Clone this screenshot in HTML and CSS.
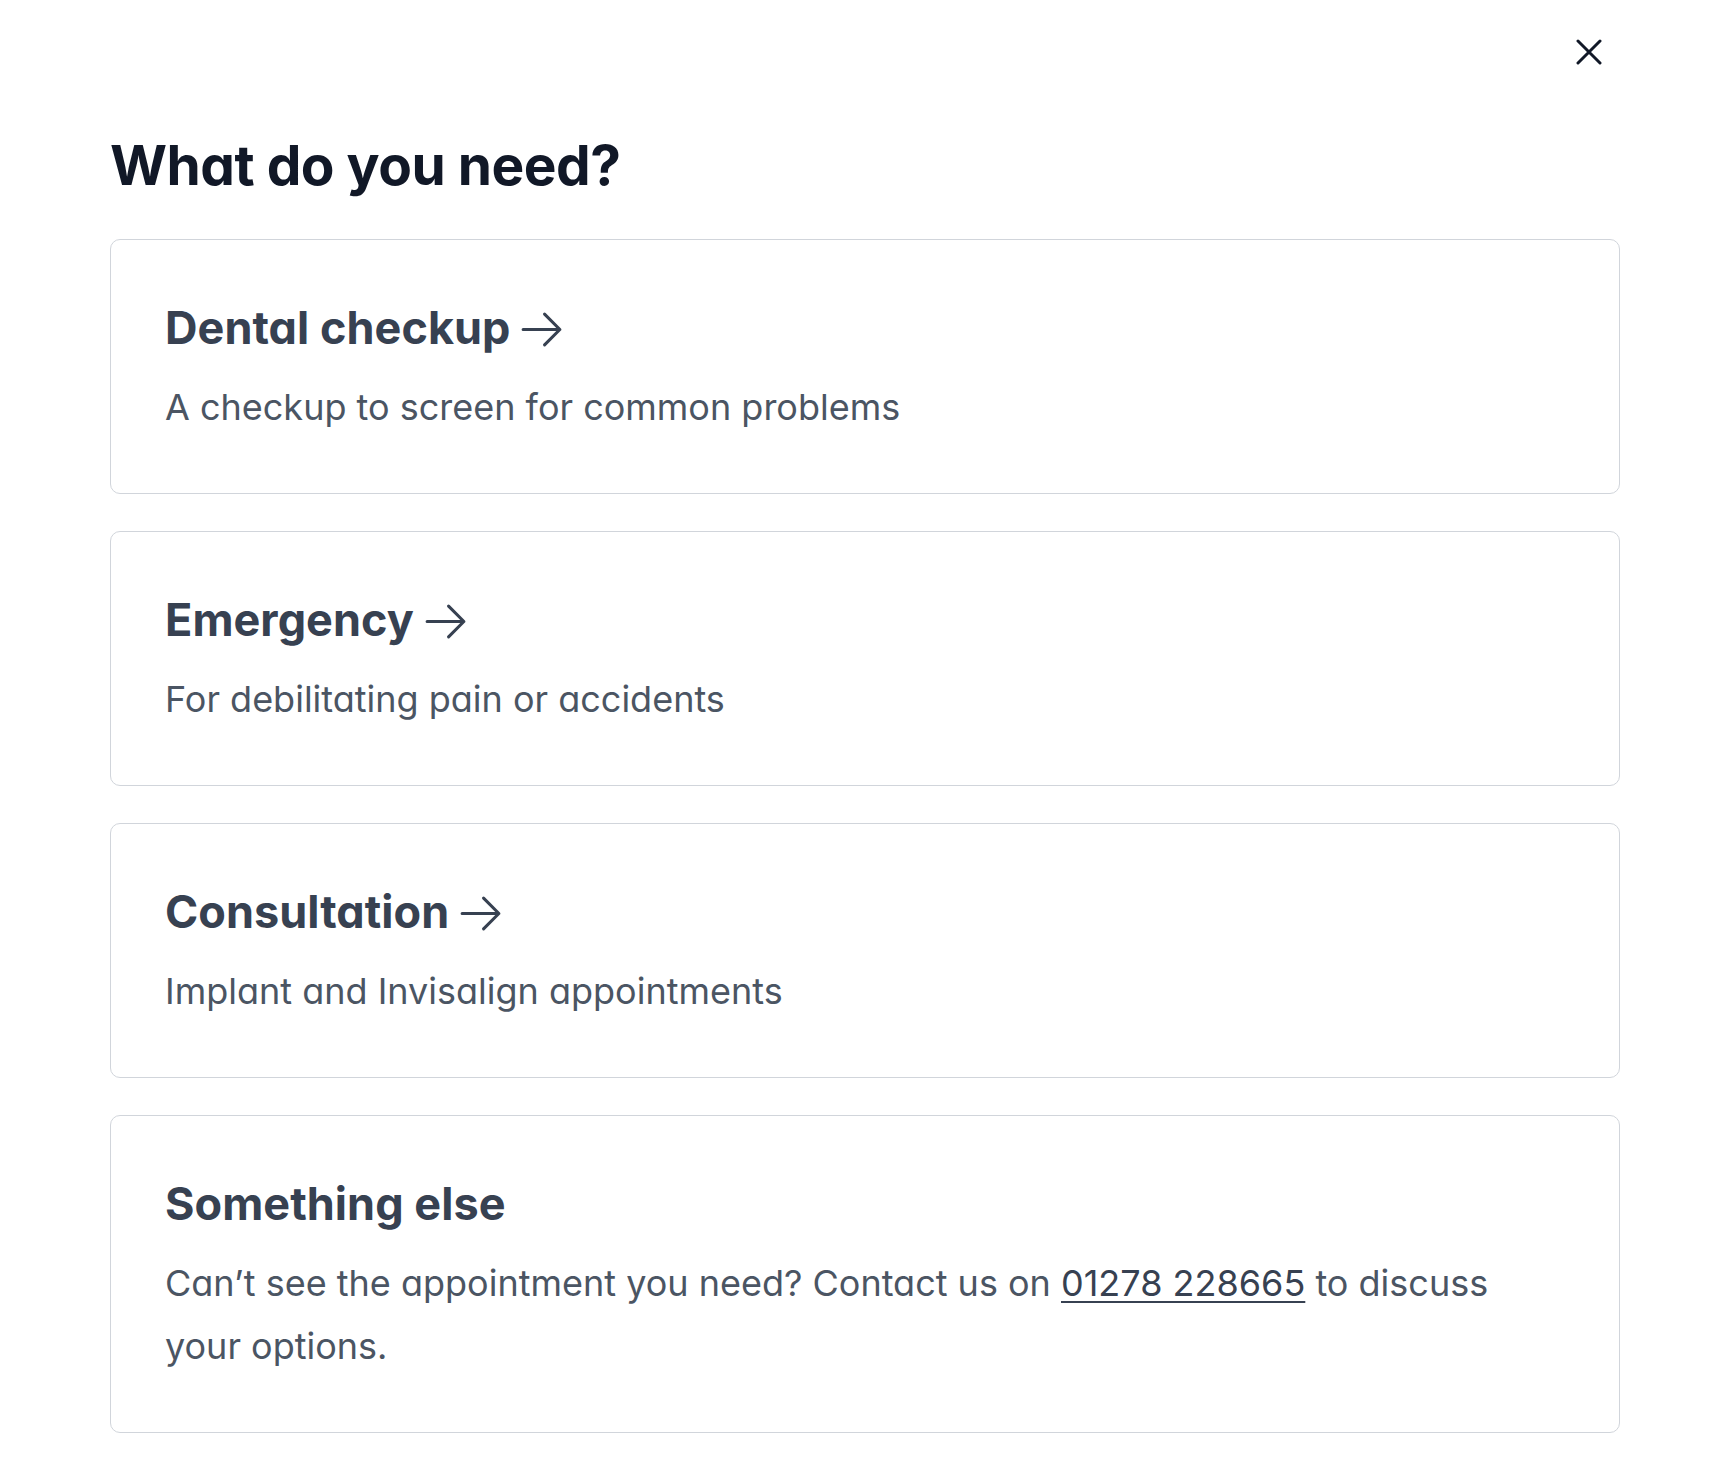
FILE: index.html
```html
<!DOCTYPE html>
<html lang="en">
<head>
<meta charset="utf-8">
<title>What do you need?</title>
<link rel="stylesheet" href="styles.css">
</head>
<body>
<div class="modal">
  <div class="topbar">
    <button class="close" aria-label="Close">
      <svg width="26" height="26" viewBox="0 0 26 26" fill="none" stroke="#111827" stroke-width="3" stroke-linecap="round"><path d="M2 2L24 24M24 2L2 24"/></svg>
    </button>
  </div>
  <h1 class="heading">What do you need?</h1>
  <div class="cards">
    <a class="card" href="#">
      <h2 class="card-title">Dental checkup <svg class="arrow" viewBox="0 0 24 24" fill="none" stroke="currentColor" stroke-width="1.5" stroke-linecap="round" stroke-linejoin="round"><path d="M13.5 4.5L21 12m0 0l-7.5 7.5M21 12H3"/></svg></h2>
      <p class="card-desc">A checkup to screen for common problems</p>
    </a>
    <a class="card" href="#">
      <h2 class="card-title">Emergency <svg class="arrow" viewBox="0 0 24 24" fill="none" stroke="currentColor" stroke-width="1.5" stroke-linecap="round" stroke-linejoin="round"><path d="M13.5 4.5L21 12m0 0l-7.5 7.5M21 12H3"/></svg></h2>
      <p class="card-desc">For debilitating pain or accidents</p>
    </a>
    <a class="card" href="#">
      <h2 class="card-title">Consultation <svg class="arrow" viewBox="0 0 24 24" fill="none" stroke="currentColor" stroke-width="1.5" stroke-linecap="round" stroke-linejoin="round"><path d="M13.5 4.5L21 12m0 0l-7.5 7.5M21 12H3"/></svg></h2>
      <p class="card-desc">Implant and Invisalign appointments</p>
    </a>
    <div class="card">
      <h2 class="card-title">Something else</h2>
      <p class="card-desc">Can’t see the appointment you need? Contact us on <a class="phone" href="#">01278 228665</a> to discuss your options.</p>
    </div>
  </div>
</div>
</body>
</html>
```
FILE: styles.css
```css
* { box-sizing: border-box; }
html, body { margin: 0; background: #ffffff; }
body {
  font-family: Inter, "Noto Sans", "Liberation Sans", sans-serif;
  font-feature-settings: "cv11";
  -webkit-font-smoothing: antialiased;
}
.modal {
  padding: 0 102px 53px 110px;
}
.topbar {
  display: flex;
  justify-content: flex-end;
  padding-top: 39px;
  padding-right: 18px;
}
.close {
  border: 0;
  background: none;
  padding: 0;
  width: 26px;
  height: 26px;
  display: block;
  cursor: pointer;
}
.close svg { display: block; }
.heading {
  margin: 67px 0 41px;
  font-size: 55px;
  line-height: 66px;
  font-weight: 700;
  color: #111827;
  letter-spacing: -0.5px;
}
.cards {
  display: flex;
  flex-direction: column;
  gap: 37px;
}
.card {
  display: block;
  border: 1px solid #d1d5db;
  border-radius: 10px;
  padding: 54px;
  text-decoration: none;
  color: inherit;
}
.card-title {
  margin: 0 0 15px;
  font-size: 45px;
  line-height: 67px;
  font-weight: 700;
  color: #374151;
  letter-spacing: 0.05px;
}
.arrow {
  width: 49px;
  height: 49px;
  vertical-align: -10px;
  margin-left: -4px;
}
.card-desc {
  margin: 0;
  font-size: 36px;
  line-height: 63px;
  font-weight: 400;
  color: #4b5563;
}
.phone {
  color: #374151;
  text-decoration: underline;
  text-decoration-thickness: 2px;
  text-underline-offset: 5px;
}
```
